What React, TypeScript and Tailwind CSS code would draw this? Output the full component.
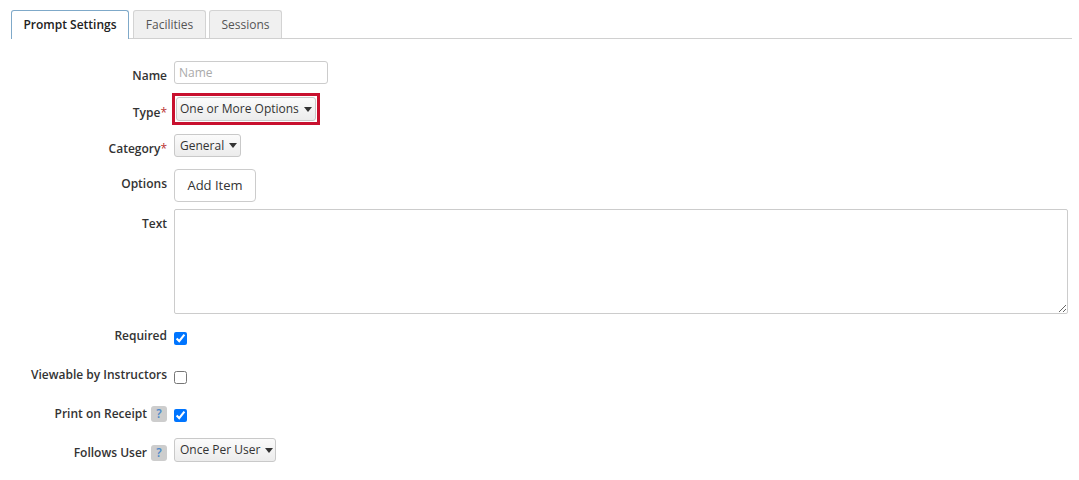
import React from 'react';

const font = { fontFamily: '"Open Sans", "Liberation Sans", sans-serif' };

function Caret() {
  return (
    <svg width="8" height="5" viewBox="0 0 8 5" className="ml-[5px] shrink-0">
      <path d="M0 0h8L4 5z" fill="#333" />
    </svg>
  );
}

function Select({ label, className }: { label: string; className: string }) {
  return (
    <div
      className={`flex items-center justify-between whitespace-nowrap rounded-[3px] border border-[#c9c9c9] bg-gradient-to-b from-[#fbfbfb] to-[#ececec] pl-[5px] pr-[4px] text-[12px] text-[#333] ${className}`}
    >
      <span className="leading-none">{label}</span>
      <Caret />
    </div>
  );
}

function Help() {
  return (
    <span className="ml-[4px] inline-flex h-[16px] w-[16px] items-center justify-center rounded-[3px] bg-[#cdcdcd] text-[12px] font-semibold text-[#4a88c8]">
      ?
    </span>
  );
}

function Row({
  label,
  required,
  help,
  labelPad,
  className,
  children,
}: {
  label: string;
  required?: boolean;
  help?: boolean;
  labelPad: string;
  className: string;
  children: React.ReactNode;
}) {
  return (
    <div className={`flex items-start ${className}`}>
      <div className={`flex w-[167px] shrink-0 items-center justify-end whitespace-nowrap text-[12px] font-semibold leading-[16px] text-[#333] ${labelPad}`}>
        <span>{label}</span>
        {required && <span className="font-normal text-[#b33]">*</span>}
        {help && <Help />}
      </div>
      <div className="ml-[7px] flex">{children}</div>
    </div>
  );
}

function Check({ checked }: { checked?: boolean }) {
  return (
    <input
      type="checkbox"
      defaultChecked={checked}
      className="mt-[4px] h-[13px] w-[13px] accent-[#0075ff]"
    />
  );
}

export default function App() {
  return (
    <div className="min-h-[480px] w-[1079px] bg-white" style={font}>
      <div className="pl-[11px] pr-[7px] pt-[10px]">
        <div className="flex items-end border-b border-[#d0d0d0]">
          <div className="-mb-px flex h-[29px] w-[118px] items-center justify-center rounded-t-[3px] border border-b-0 border-[#7fa9c9] bg-white text-[12px] font-semibold text-[#222]">
            Prompt Settings
          </div>
          <div className="ml-[4px] flex h-[28px] w-[73px] items-center justify-center rounded-t-[3px] border border-b-0 border-[#d3d3d3] bg-[#f0f0f0] text-[12px] text-[#555]">
            Facilities
          </div>
          <div className="ml-[3px] flex h-[28px] w-[73px] items-center justify-center rounded-t-[3px] border border-b-0 border-[#d3d3d3] bg-[#f0f0f0] text-[12px] text-[#555]">
            Sessions
          </div>
        </div>
      </div>

      <div className="flex flex-col">
        <Row label="Name" labelPad="pt-[7px]" className="mt-[22px]">
          <input
            placeholder="Name"
            className="h-[23px] w-[154px] rounded-[3px] border border-[#cccccc] px-[4px] text-[12px] text-[#333] outline-none placeholder:text-[#aaa]"
          />
        </Row>
        <Row label="Type" required labelPad="pt-[12px]" className="mt-[9px]">
          <div className="-ml-[2px] border-[3px] border-[#c8102e] p-[1px]">
            <Select label="One or More Options" className="h-[24px] w-[140px] !pl-[3px] !pr-[5px]" />
          </div>
        </Row>
        <Row label="Category" required labelPad="pt-[7px]" className="mt-[9px]">
          <Select label="General" className="h-[23px] w-[67px]" />
        </Row>
        <Row label="Options" labelPad="pt-[7px]" className="mt-[12px]">
          <button className="h-[33px] w-[82px] rounded-[4px] border border-[#cccccc] bg-white text-[13px] text-[#333]">
            Add Item
          </button>
        </Row>
        <Row label="Text" labelPad="pt-[7px]" className="mt-[7px]">
          <textarea className="h-[105px] w-[894px] rounded-[2px] border border-[#cccccc] outline-none" />
        </Row>
        <Row label="Required" labelPad="pt-0" className="mt-[14px]">
          <Check checked />
        </Row>
        <Row label="Viewable by Instructors" labelPad="pt-0" className="mt-[22px]">
          <Check />
        </Row>
        <Row label="Print on Receipt" help labelPad="pt-[1px]" className="mt-[21px]">
          <Check checked />
        </Row>
        <Row label="Follows User" help labelPad="pt-[7px]" className="mt-[16px]">
          <Select label="Once Per User" className="h-[24px] w-[102px]" />
        </Row>
      </div>
    </div>
  );
}
